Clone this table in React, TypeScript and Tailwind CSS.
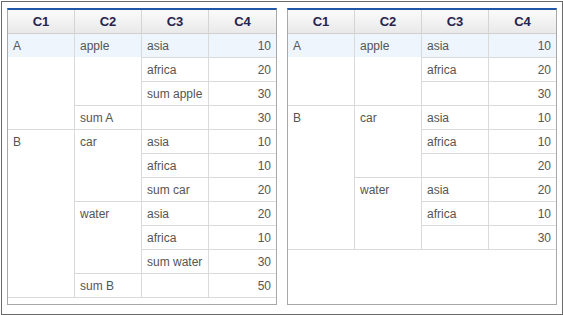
import React from 'react';

type Cell = { text?: string; span?: number; num?: boolean };
type Row = (Cell | null)[];

// null means the slot is covered by a merged cell above
const leftRows: Row[] = [
  [{ text: 'A', span: 4 }, { text: 'apple', span: 3 }, { text: 'asia' }, { text: '10', num: true }],
  [null, null, { text: 'africa' }, { text: '20', num: true }],
  [null, null, { text: 'sum apple' }, { text: '30', num: true }],
  [null, { text: 'sum A' }, { text: '' }, { text: '30', num: true }],
  [{ text: 'B', span: 7 }, { text: 'car', span: 3 }, { text: 'asia' }, { text: '10', num: true }],
  [null, null, { text: 'africa' }, { text: '10', num: true }],
  [null, null, { text: 'sum car' }, { text: '20', num: true }],
  [null, { text: 'water', span: 3 }, { text: 'asia' }, { text: '20', num: true }],
  [null, null, { text: 'africa' }, { text: '10', num: true }],
  [null, null, { text: 'sum water' }, { text: '30', num: true }],
  [null, { text: 'sum B' }, { text: '' }, { text: '50', num: true }],
];

const rightRows: Row[] = [
  [{ text: 'A', span: 3 }, { text: 'apple', span: 3 }, { text: 'asia' }, { text: '10', num: true }],
  [null, null, { text: 'africa' }, { text: '20', num: true }],
  [null, null, { text: '' }, { text: '30', num: true }],
  [{ text: 'B', span: 6 }, { text: 'car', span: 3 }, { text: 'asia' }, { text: '10', num: true }],
  [null, null, { text: 'africa' }, { text: '10', num: true }],
  [null, null, { text: '' }, { text: '20', num: true }],
  [null, { text: 'water', span: 3 }, { text: 'asia' }, { text: '20', num: true }],
  [null, null, { text: 'africa' }, { text: '10', num: true }],
  [null, null, { text: '' }, { text: '30', num: true }],
];

const spanClass: Record<number, string> = {
  1: 'row-span-1',
  2: 'row-span-2',
  3: 'row-span-3',
  4: 'row-span-4',
  5: 'row-span-5',
  6: 'row-span-6',
  7: 'row-span-7',
};

const Grid = ({ rows }: { rows: Row[] }) => (
  <div className="w-[270px] h-[297px] border-t-2 border-t-[#2357a6] border-x border-b border-x-[#a8a8a8] border-b-[#a8a8a8] bg-white flex flex-col">
    <div className="grid grid-cols-[67px_67px_67px_67px] h-[24px] bg-gradient-to-b from-[#fbfbfb] to-[#e9e9e9] border-b border-[#cfcfcf]">
      {['C1', 'C2', 'C3', 'C4'].map((h, i) => (
        <div
          key={h}
          className={`flex items-center justify-center font-bold text-[13px] text-[#25234f] ${i < 3 ? 'border-r border-[#d4d4d4]' : ''}`}
        >
          {h}
        </div>
      ))}
    </div>
    <div className="grid grid-cols-[67px_67px_67px_67px] auto-rows-[24px]">
      {rows.map((row, r) =>
        row.map((cell, c) => {
          if (!cell) return null;
          const span = cell.span ?? 1;
          return (
            <div
              key={`${r}-${c}`}
              className={`${spanClass[span]} border-b border-[#dadada] ${c < 3 ? 'border-r' : ''}`}
              style={{ gridColumnStart: c + 1, gridRowStart: r + 1 }}
            >
              <div
                className={`h-[23px] flex items-center px-[5px] text-[12px] text-[#555] ${
                  cell.num ? 'justify-end' : ''
                } ${r === 0 ? 'bg-[#eef5fc]' : ''}`}
              >
                {cell.text}
              </div>
            </div>
          );
        })
      )}
    </div>
  </div>
);

export default function App() {
  return (
    <div className="bg-white w-[563px] h-[315px]" style={{ fontFamily: '"Liberation Sans", Arial, sans-serif' }}>
      <div className="ml-px mt-px w-[562px] h-[314px] border border-[#6a6a6a] pl-[5px] pt-[6px] flex gap-[10px]">
        <Grid rows={leftRows} />
        <Grid rows={rightRows} />
      </div>
    </div>
  );
}
